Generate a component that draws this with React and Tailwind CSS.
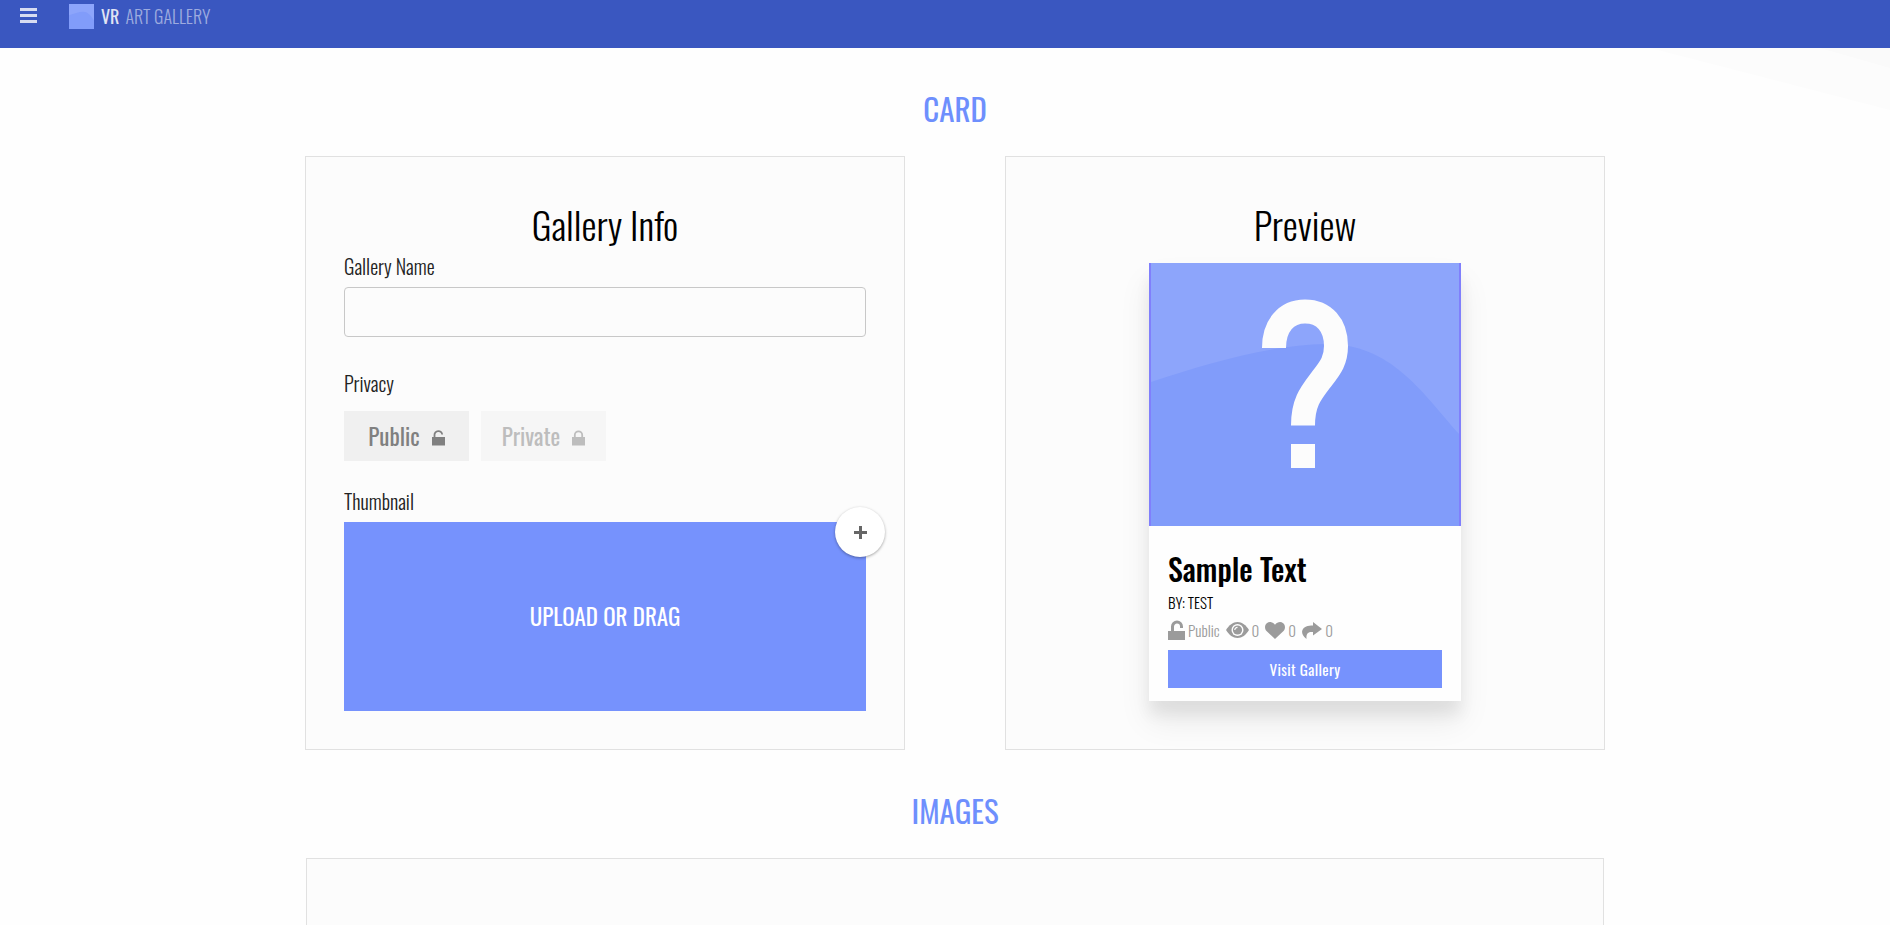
import React from "react";

function Wave({ className, children }) {
  return (
    <svg viewBox="0 0 308 263" preserveAspectRatio="none" className={className} aria-hidden="true">
      <rect width="308" height="263" fill="#8da5fb" />
      <path d="M0 119C60 99 120 82 175 81C240 81 270 128 308 171V263H0Z" fill="#819cfa" />
      {children}
    </svg>
  );
}

function Lock({ open, className }) {
  return (
    <svg viewBox="0 0 13 16" className={className} fill="currentColor" aria-hidden="true">
      <path d="M0 7h13v8.500H0z" />
      <path
        d={open ? "M2.500 7.500V5a3.800 3.600 0 0 1 7.700-.5" : "M2.800 7.500V5a3.700 3.600 0 0 1 7.400 0V7.500"}
        fill="none"
        stroke="currentColor"
        strokeWidth="1.800"
      />
    </svg>
  );
}

function UnlockIcon() {
  return (
    <svg viewBox="0 0 17 20" className="h-5 w-[17px]" fill="currentColor" aria-hidden="true">
      <path d="M0 11h17v9H0z" />
      <path d="M4.500 12V6.500a4.500 4.500 0 0 1 9 0V8" fill="none" stroke="currentColor" strokeWidth="3" />
    </svg>
  );
}

function EyeIcon() {
  return (
    <svg viewBox="0 0 23 16" className="h-4 w-[23px]" aria-hidden="true">
      <path d="M0 8C3 3 7 0 11.500 0S20 3 23 8C20 13 16 16 11.500 16S3 13 0 8Z" fill="currentColor" />
      <circle cx="11.500" cy="8" r="6" fill="#fefefe" />
      <circle cx="11.500" cy="8" r="4.600" fill="currentColor" />
      <path d="M8.800 8a2.700 2.700 0 0 1 2.700-2.700" fill="none" stroke="#fefefe" strokeWidth="1.200" />
    </svg>
  );
}

function HeartIcon() {
  return (
    <svg viewBox="0 0 20 17" className="h-[17px] w-5" fill="currentColor" aria-hidden="true">
      <path d="M10 17L1.500 9C-.6 6.700-.4 3 1.800 1.200C4.300-.8 7.800 0 10 2.700C12.200 0 15.700-.8 18.200 1.200C20.400 3 20.600 6.700 18.500 9Z" />
    </svg>
  );
}

function ShareIcon() {
  return (
    <svg viewBox="0 0 20 17" className="h-[17px] w-5" fill="currentColor" aria-hidden="true">
      <path d="M11 0L20 7L11 13.500V10C6.500 9.500 4 11 4.500 17C1 14.500-.5 11.500.3 8.500C1.500 4.500 6 3.500 11 3.500Z" />
    </svg>
  );
}

const panel = "border border-[#e1e1e1] bg-[#fcfcfc]";
const sectionTitle = "text-center text-[31px] leading-10 text-[#6e8ffd]";
const panelTitle = "text-center text-[38px] font-light leading-12";
const fieldLabel = "block text-xl font-light leading-7 text-[#222]";

export default function App() {
  return (
    <div className="relative min-h-screen bg-[#fefefe] text-black [font-family:Oswald,'Liberation_Sans_Narrow',sans-serif]">
      <svg viewBox="0 0 240 64" className="absolute right-0 top-12 h-16 w-60" aria-hidden="true">
        <path d="M0 0H240V62Z" fill="#fcfcfc" />
        <path d="M170 0H240V20Z" fill="#fafafa" />
      </svg>
      <header className="relative flex h-12 items-start bg-[#3a57c0] pl-5">
        <button type="button" aria-label="Open menu" className="mt-2 text-[#d7dcf1]">
          <svg viewBox="0 0 17 15" className="h-[15px] w-[17px]" fill="currentColor" aria-hidden="true">
            <path d="M0 0h17v3H0zM0 6h17v3H0zM0 12h17v3H0z" />
          </svg>
        </button>
        <a href="#" className="ml-8 flex items-start text-lg leading-8">
          <Wave className="mt-1 size-[25px]" />
          <span className="ml-[7px] text-[#e0e4f4]">VR</span>
          <span className="ml-[6px] font-light text-[#9dabdf]">ART GALLERY</span>
        </a>
      </header>

      <main className="relative mx-auto max-w-[1320px] pl-5">
        <h2 className={`${sectionTitle} pt-10`}>CARD</h2>
        <div className="mt-7 grid grid-cols-2 gap-[100px]">
          <section className={`${panel} px-[38px] pb-[38px] pt-[43px]`}>
            <h3 className={panelTitle}>Gallery Info</h3>
            <label htmlFor="name" className={`${fieldLabel} mt-1`}>Gallery Name</label>
            <input id="name" type="text" className="mt-[7px] block h-[50px] w-full rounded-[4px] border border-[#c8c8c8] bg-transparent px-4 text-xl" />
            <h4 className={`${fieldLabel} mt-8`}>Privacy</h4>
            <div className="mt-[14px] flex gap-3 text-[23px]">
              <button type="button" className="flex h-[50px] w-[125px] items-center justify-center gap-3 bg-[#f0f0f0] text-[#808080]">
                Public
                <Lock open className="mt-1 h-4 w-[13px]" />
              </button>
              <button type="button" className="flex h-[50px] w-[125px] items-center justify-center gap-3 bg-[#f6f6f6] text-[#bdbdbd]">
                Private
                <Lock className="mt-1 h-4 w-[13px]" />
              </button>
            </div>
            <h4 className={`${fieldLabel} mt-[26px]`}>Thumbnail</h4>
            <div className="relative mt-[7px]">
              <button type="button" className="block h-[189px] w-full bg-[#7692fd] text-[23px] text-white">UPLOAD OR DRAG</button>
              <button type="button" aria-label="Add thumbnail" className="absolute -right-[19px] -top-[15px] flex size-[50px] items-center justify-center rounded-full bg-white text-[#666] shadow-[0_1px_3px_rgba(0,0,0,0.35)]">
                <svg viewBox="0 0 13 13" className="size-[13px]" fill="currentColor" aria-hidden="true">
                  <path d="M5 0h3v5h5v3H8v5H5V8H0V5h5z" />
                </svg>
              </button>
            </div>
          </section>

          <section className={`${panel} px-[38px] pb-[38px] pt-[43px]`}>
            <h3 className={panelTitle}>Preview</h3>
            <article className="mx-auto mt-[15px] w-[312px] bg-[#fefefe] shadow-[0_20px_30px_rgba(0,0,0,0.08),0_14px_14px_rgba(0,0,0,0.06)]">
              <div className="h-[263px] border-x-2 border-[#807ffc]">
                <Wave className="size-full">
                  <path
                    d="M123 85C123 63 135 48.500 154 48.500C173 48.500 185 62 185 83C185 97 180 104 171 115.500C160 130 152 139 152 162.500M152 181V205"
                    fill="none"
                    stroke="#fcfcfc"
                    strokeWidth="24"
                  />
                </Wave>
              </div>
              <div className="px-[19px] pb-[13px] pt-[23px]">
                <h4 className="text-3xl font-medium leading-10">Sample Text</h4>
                <p className="mt-[3px] text-[15px] font-light leading-5">BY: TEST</p>
                <div className="mt-[6px] flex h-6 items-center gap-[6px] text-[15px] font-light text-[#9b9b9b]">
                  <span className="flex items-center gap-[3px]"><UnlockIcon />Public</span>
                  <span className="flex items-center gap-[3px]"><EyeIcon />0</span>
                  <span className="flex items-center gap-[3px]"><HeartIcon />0</span>
                  <span className="flex items-center gap-[3px]"><ShareIcon />0</span>
                </div>
                <button type="button" className="mt-2 block h-[38px] w-full bg-[#7692fd] text-[15px] tracking-wide text-white">Visit Gallery</button>
              </div>
            </article>
          </section>
        </div>

        <h2 className={`${sectionTitle} mt-10`}>IMAGES</h2>
        <section aria-label="Images" className={`${panel} mx-px mt-7 h-[67px] border-b-0`} />
      </main>
    </div>
  );
}
